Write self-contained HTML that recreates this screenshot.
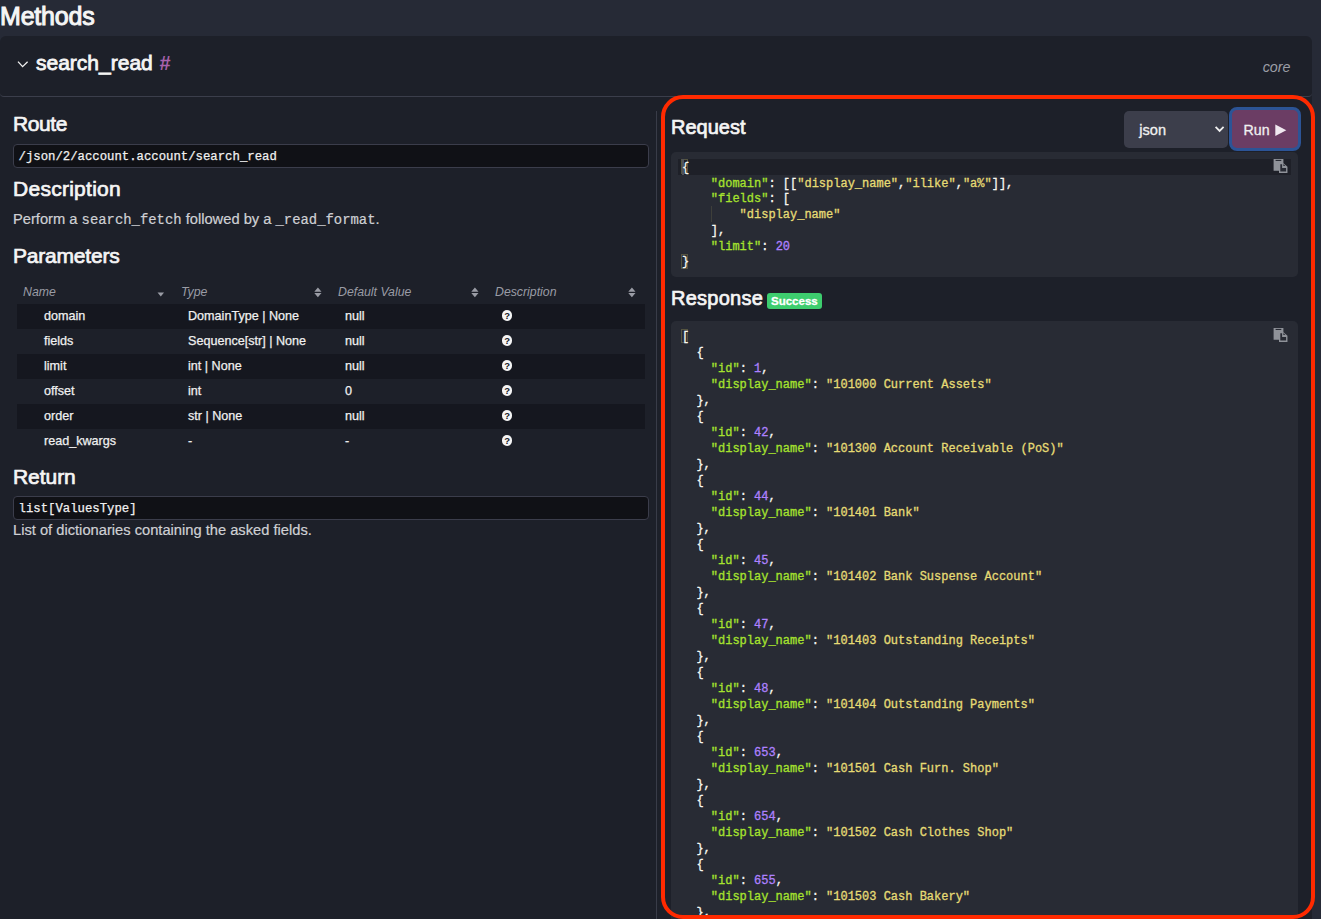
<!DOCTYPE html>
<html><head><meta charset="utf-8">
<style>
html,body{margin:0;padding:0;}
body{width:1321px;height:919px;overflow:hidden;background:#262a36;position:relative;font-family:"Liberation Sans",sans-serif;color:#fff;}
.abs{position:absolute;white-space:pre;}
#methods{left:0;top:0.5px;font-size:25px;font-weight:normal;letter-spacing:0px;line-height:30px;color:#f5f5f5;-webkit-text-stroke:1px #f5f5f5;letter-spacing:-0.2px;}
#card{position:absolute;left:0;top:36px;width:1312px;height:900px;background:#1d2029;border-radius:6px;}
#hdr{position:absolute;left:0;top:0;width:1312px;height:60px;border-bottom:1px solid #3b3e4b;border-radius:6px 6px 4px 4px;}
.h4{font-size:21px;font-weight:normal;line-height:24px;color:#f5f5f5;-webkit-text-stroke:0.7px #f5f5f5;}
.mono{font-family:"Liberation Mono",monospace;}
.codebox{position:absolute;left:13px;width:634px;height:22px;background:#101116;border:1px solid #3b3d4b;border-radius:4px;}
.codebox span{position:absolute;left:4.5px;top:3.5px;font-size:12.3px;line-height:16px;color:#f0f0f0;-webkit-text-stroke:0.25px currentColor;font-family:"Liberation Mono",monospace;white-space:pre;}
.txt{font-size:14.7px;color:#cfd0d4;line-height:18px;-webkit-text-stroke:0.2px #cfd0d4;}
#tbl{position:absolute;left:17px;top:279px;width:628px;}
.th{position:absolute;top:1.2px;font-size:12.3px;font-style:italic;color:#9a9ca5;line-height:25px;}
.row{position:absolute;left:0;width:628px;height:25px;}
.row.s{background:#15171f;}
.cell{position:absolute;top:-0.5px;font-size:12.6px;line-height:25px;color:#f0f0f0;white-space:pre;-webkit-text-stroke:0.25px #f0f0f0;}
.q{position:absolute;width:10.5px;height:10.5px;border-radius:50%;background:#f5f5f5;top:6.4px;left:484.8px;}
.q::after{content:"?";position:absolute;left:0;top:0.2px;width:10.5px;height:10.5px;line-height:10.5px;text-align:center;font-size:9.5px;font-weight:bold;color:#15171f;}
.editor{position:absolute;left:671px;width:627px;background:#282b34;border-radius:5px;overflow:hidden;}
.editor pre{margin:0;position:absolute;left:11px;font-family:"Liberation Mono",monospace;font-size:12px;color:#f8f8f2;-webkit-text-stroke:0.3px currentColor;}
.k{color:#a6e22e;}.s{color:#e6db74;}.n{color:#ae81ff;}
</style></head><body>
<div id="methods" class="abs">Methods</div>
<div id="card">
  <div id="hdr">
    <svg style="position:absolute;left:16px;top:24px" width="14" height="9" viewBox="0 0 14 9"><polyline points="2,1.6 6.6,6.6 11.6,1.75" fill="none" stroke="#f0f0f0" stroke-width="1.3"/></svg>
    <div class="abs" style="left:36px;top:13.5px;font-size:21px;font-weight:normal;letter-spacing:0px;line-height:26px;color:#f5f5f5;-webkit-text-stroke:0.8px #f5f5f5">search_read</div>
    <div class="abs" style="left:159.5px;top:13.5px;font-size:20px;font-weight:bold;line-height:26px;color:#a862ad">#</div>
    <div class="abs" style="left:1262.7px;top:21px;font-size:14.3px;font-style:italic;line-height:20px;color:#9c9ea6">core</div>
  </div>
</div>
<!-- divider -->
<div style="position:absolute;left:656px;top:111px;width:1px;height:808px;background:#393c48"></div>

<!-- left column -->
<div class="abs h4" style="left:13px;top:112.3px;letter-spacing:-0.41px">Route</div>
<div class="codebox" style="top:144px"><span>/json/2/account.account/search_read</span></div>
<div class="abs h4" style="left:13px;top:176.5px;letter-spacing:0.27px">Description</div>
<div class="abs txt" style="left:13px;top:209.5px">Perform a <span class="mono" style="font-size:13.9px;-webkit-text-stroke:0.2px currentColor">search_fetch</span> followed by a <span class="mono" style="font-size:13.9px;-webkit-text-stroke:0.2px currentColor">_read_format</span>.</div>
<div class="abs h4" style="left:13px;top:243.8px;letter-spacing:-0.2px">Parameters</div>

<div id="tbl">
  <div class="th" style="left:6px">Name</div>
  <svg style="position:absolute;left:140px;top:13px" width="8" height="5" viewBox="0 0 8 5"><path d="M0.5,0.5 L7,0.5 L3.75,4.5 Z" fill="#9a9ca5"/></svg>
  <div class="th" style="left:164px">Type</div>
  <svg style="position:absolute;left:296.8px;top:7.5px" width="8" height="11" viewBox="0 0 8 11"><path d="M0.3,4.8 L7.5,4.8 L3.9,0.6 Z M0.3,6 L7.5,6 L3.9,10.2 Z" fill="#9a9ca5"/></svg>
  <div class="th" style="left:321px">Default Value</div>
  <svg style="position:absolute;left:453.8px;top:7.5px" width="8" height="11" viewBox="0 0 8 11"><path d="M0.3,4.8 L7.5,4.8 L3.9,0.6 Z M0.3,6 L7.5,6 L3.9,10.2 Z" fill="#9a9ca5"/></svg>
  <div class="th" style="left:478px">Description</div>
  <svg style="position:absolute;left:610.8px;top:7.5px" width="8" height="11" viewBox="0 0 8 11"><path d="M0.3,4.8 L7.5,4.8 L3.9,0.6 Z M0.3,6 L7.5,6 L3.9,10.2 Z" fill="#9a9ca5"/></svg>

  <div class="row s" style="top:25px"><div class="cell" style="left:27px">domain</div><div class="cell" style="left:171px">DomainType | None</div><div class="cell" style="left:328px">null</div><div class="q"></div></div>
  <div class="row" style="top:50px"><div class="cell" style="left:27px">fields</div><div class="cell" style="left:171px">Sequence[str] | None</div><div class="cell" style="left:328px">null</div><div class="q"></div></div>
  <div class="row s" style="top:75px"><div class="cell" style="left:27px">limit</div><div class="cell" style="left:171px">int | None</div><div class="cell" style="left:328px">null</div><div class="q"></div></div>
  <div class="row" style="top:100px"><div class="cell" style="left:27px">offset</div><div class="cell" style="left:171px">int</div><div class="cell" style="left:328px">0</div><div class="q"></div></div>
  <div class="row s" style="top:125px"><div class="cell" style="left:27px">order</div><div class="cell" style="left:171px">str | None</div><div class="cell" style="left:328px">null</div><div class="q"></div></div>
  <div class="row" style="top:150px"><div class="cell" style="left:27px">read_kwargs</div><div class="cell" style="left:171px">-</div><div class="cell" style="left:328px">-</div><div class="q"></div></div>
</div>

<div class="abs h4" style="left:13px;top:464.8px;letter-spacing:-0.05px">Return</div>
<div class="codebox" style="top:496px"><span>list[ValuesType]</span></div>
<div class="abs txt" style="left:13px;top:521px">List of dictionaries containing the asked fields.</div>

<!-- right column -->
<div class="abs" style="left:671px;top:115px;font-size:20px;font-weight:normal;letter-spacing:0px;line-height:24px;color:#f5f5f5;-webkit-text-stroke:0.7px #f5f5f5">Request</div>
<div style="position:absolute;left:1124px;top:111px;width:104px;height:37px;background:#3c3e4b;border-radius:5px"></div>
<div class="abs" style="left:1139.3px;top:121.3px;font-size:14.6px;line-height:18px;color:#f0f0f0;-webkit-text-stroke:0.3px #f0f0f0">json</div>
<svg style="position:absolute;left:1213px;top:124px" width="13" height="9" viewBox="0 0 13 9"><polyline points="2.6,2.9 6.6,6.9 10.6,2.9" fill="none" stroke="#f0f0f0" stroke-width="1.8"/></svg>
<div style="position:absolute;left:1229px;top:107.4px;width:66px;height:37.7px;background:#6b3d64;border:3px solid #2c5496;border-radius:8px"></div>
<div class="abs" style="left:1243.5px;top:121px;font-size:14.2px;line-height:18px;color:#f0f0f0;-webkit-text-stroke:0.3px #f0f0f0">Run</div>
<svg style="position:absolute;left:1275px;top:123.5px" width="13" height="13" viewBox="0 0 13 13"><path d="M0.3,0.5 L11.3,6.25 L0.3,12 Z" fill="#f0e8f0"/></svg>

<div class="editor" style="top:152px;height:125px">
  <div style="position:absolute;left:7px;top:7px;width:613px;height:16px;background:#1e2028"></div>
  <svg style="position:absolute;left:601px;top:6px" width="16" height="16" viewBox="0 0 16 16"><path d="M1.6,1 H11.4 V4.9 H7 V12.75 H1.6 Z" fill="#8f9299"/><rect x="3.6" y="1.9" width="5.7" height="1.1" fill="#282b34"/><path d="M7,4.9 H11.2 L15.45,8.8 V15 H7 Z" fill="#8f9299"/><path d="M8.3,6.2 H10.1 V9.9 H14.1 V13.6 H8.3 Z" fill="#282b34"/><path d="M11.4,6.1 L13.3,8 H11.4 Z" fill="#282b34"/></svg>
  <div style="position:absolute;left:10.2px;top:7px;width:7px;height:14.5px;border:1px solid #55543f;box-sizing:border-box"></div>
  <div style="position:absolute;left:10.7px;top:7px;width:2.2px;height:15.5px;background:#50535b"></div>
  <div style="position:absolute;left:10px;top:102.3px;width:7px;height:15px;border:1px solid #55543f;box-sizing:border-box"></div>
  <div style="position:absolute;left:40px;top:54px;width:1px;height:16px;background:#3e3f3a"></div>
  <pre style="top:8.75px;line-height:15.75px"><span>{</span>
    <span class="k">"domain"</span>: [[<span class="s">"display_name"</span>,<span class="s">"ilike"</span>,<span class="s">"a%"</span>]],
    <span class="k">"fields"</span>: [
        <span class="s">"display_name"</span>
    ],
    <span class="k">"limit"</span>: <span class="n">20</span>
}</pre>
</div>

<div class="abs" style="left:671px;top:286px;font-size:20px;font-weight:normal;letter-spacing:0.25px;line-height:24px;color:#f5f5f5;-webkit-text-stroke:0.7px #f5f5f5">Response</div>
<div style="position:absolute;left:767px;top:293px;width:55px;height:16px;background:#3dcd6e;border-radius:3px"></div>
<div class="abs" style="left:771px;top:294px;font-size:11.5px;font-weight:bold;line-height:14px;color:#fff;-webkit-text-stroke:0.3px #fff">Success</div>

<div class="editor" style="top:321px;height:620px">
  <svg style="position:absolute;left:601px;top:6px" width="16" height="16" viewBox="0 0 16 16"><path d="M1.6,1 H11.4 V4.9 H7 V12.75 H1.6 Z" fill="#8f9299"/><rect x="3.6" y="1.9" width="5.7" height="1.1" fill="#282b34"/><path d="M7,4.9 H11.2 L15.45,8.8 V15 H7 Z" fill="#8f9299"/><path d="M8.3,6.2 H10.1 V9.9 H14.1 V13.6 H8.3 Z" fill="#282b34"/><path d="M11.4,6.1 L13.3,8 H11.4 Z" fill="#282b34"/></svg>
  <div style="position:absolute;left:10px;top:7.5px;width:7px;height:14.5px;border:1px solid #55543f;box-sizing:border-box"></div>
  <pre style="top:8px;line-height:16px">[
  {
    <span class="k">"id"</span>: <span class="n">1</span>,
    <span class="k">"display_name"</span>: <span class="s">"101000 Current Assets"</span>
  },
  {
    <span class="k">"id"</span>: <span class="n">42</span>,
    <span class="k">"display_name"</span>: <span class="s">"101300 Account Receivable (PoS)"</span>
  },
  {
    <span class="k">"id"</span>: <span class="n">44</span>,
    <span class="k">"display_name"</span>: <span class="s">"101401 Bank"</span>
  },
  {
    <span class="k">"id"</span>: <span class="n">45</span>,
    <span class="k">"display_name"</span>: <span class="s">"101402 Bank Suspense Account"</span>
  },
  {
    <span class="k">"id"</span>: <span class="n">47</span>,
    <span class="k">"display_name"</span>: <span class="s">"101403 Outstanding Receipts"</span>
  },
  {
    <span class="k">"id"</span>: <span class="n">48</span>,
    <span class="k">"display_name"</span>: <span class="s">"101404 Outstanding Payments"</span>
  },
  {
    <span class="k">"id"</span>: <span class="n">653</span>,
    <span class="k">"display_name"</span>: <span class="s">"101501 Cash Furn. Shop"</span>
  },
  {
    <span class="k">"id"</span>: <span class="n">654</span>,
    <span class="k">"display_name"</span>: <span class="s">"101502 Cash Clothes Shop"</span>
  },
  {
    <span class="k">"id"</span>: <span class="n">655</span>,
    <span class="k">"display_name"</span>: <span class="s">"101503 Cash Bakery"</span>
  },
  {</pre>
</div>

<!-- red annotation border -->
<div style="position:absolute;left:661px;top:95px;width:646px;height:816px;border:4px solid #ff2a00;border-radius:22px"></div>
</body></html>
